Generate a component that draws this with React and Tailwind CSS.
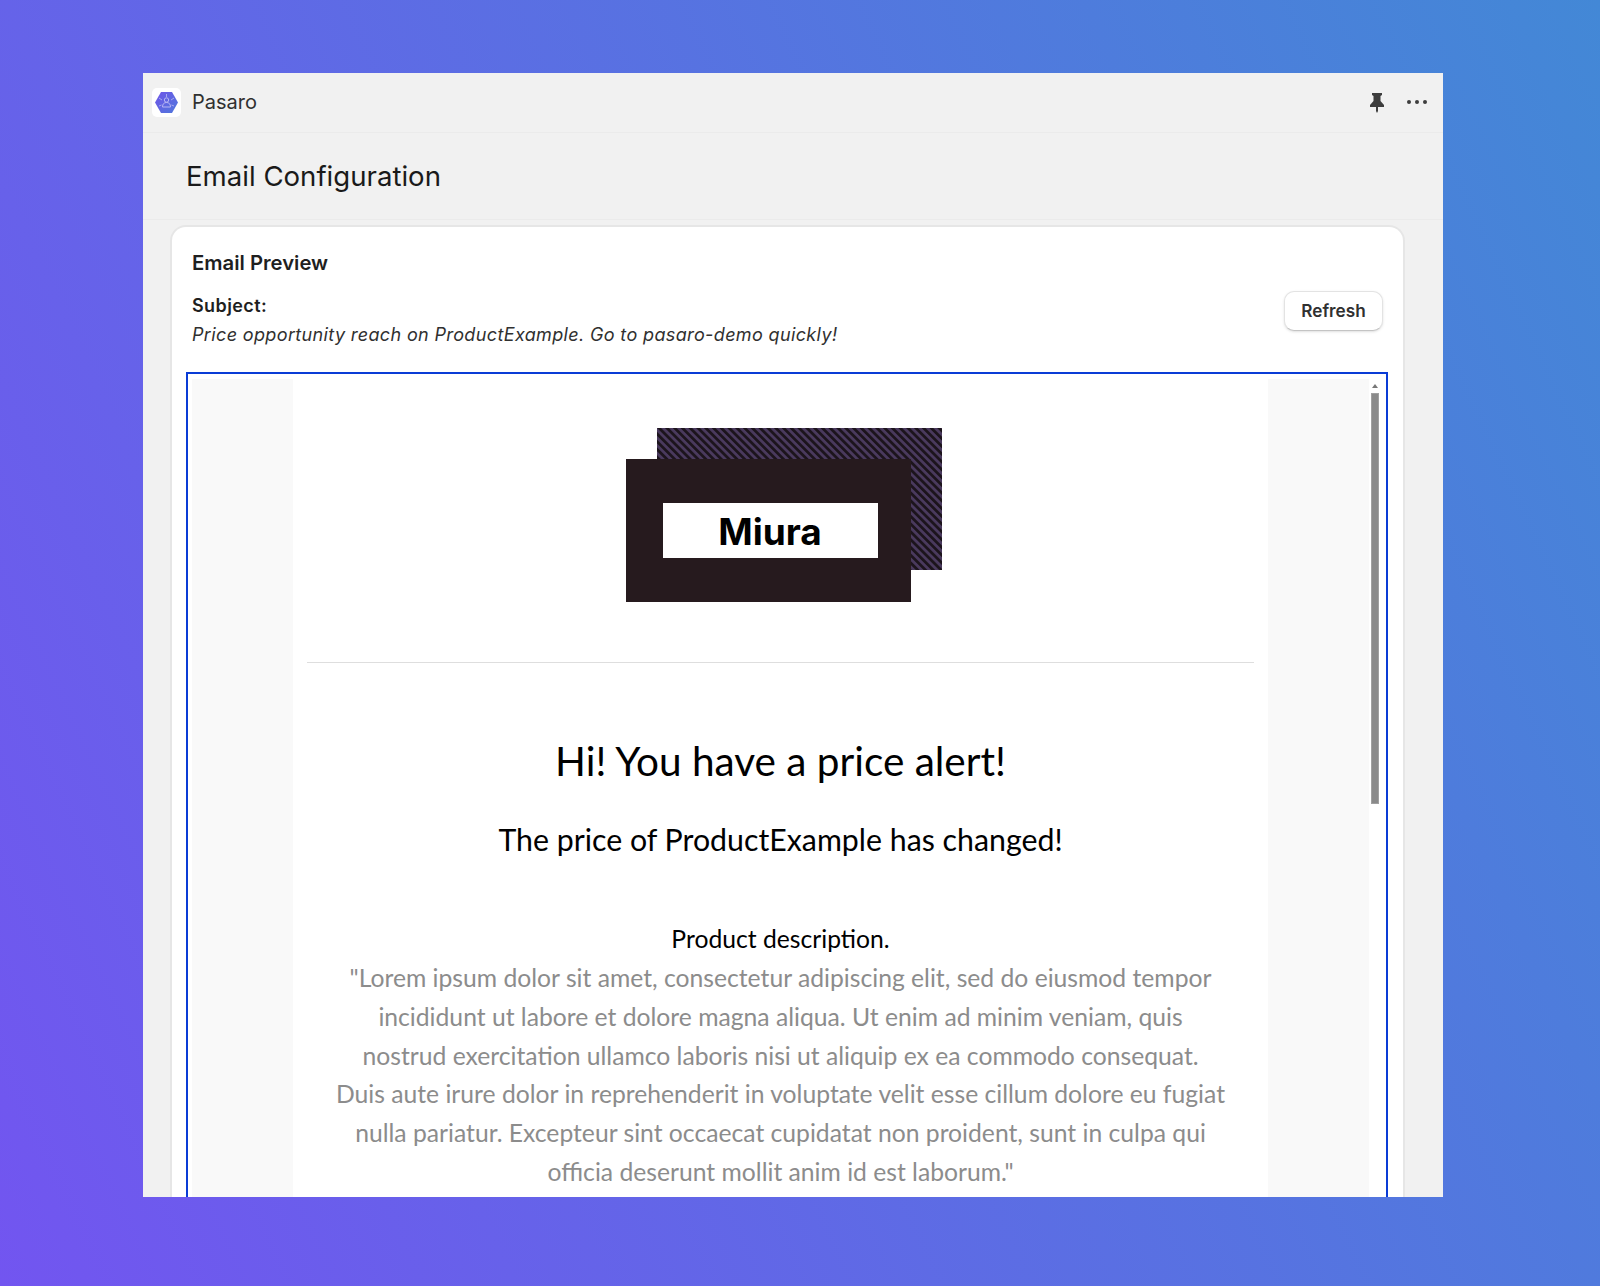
const paragraph = [
  '"Lorem ipsum dolor sit amet, consectetur adipiscing elit, sed do eiusmod tempor',
  'incididunt ut labore et dolore magna aliqua. Ut enim ad minim veniam, quis',
  'nostrud exercitation ullamco laboris nisi ut aliquip ex ea commodo consequat.',
  'Duis aute irure dolor in reprehenderit in voluptate velit esse cillum dolore eu fugiat',
  'nulla pariatur. Excepteur sint occaecat cupidatat non proident, sunt in culpa qui',
  'officia deserunt mollit anim id est laborum."',
]

function AppLogo() {
  return (
    <div className="flex h-[29px] w-[29px] items-center justify-center rounded-[5px] bg-white">
      <svg width="25" height="23" viewBox="0 0 25 23">
        <defs>
          <linearGradient id="hex" x1="0" y1="0" x2="1" y2="1">
            <stop offset="0" stopColor="#6f55e8" />
            <stop offset="1" stopColor="#5078dc" />
          </linearGradient>
        </defs>
        <path d="M7 1h11l6 10.500-6 10.500H7L1 11.500z" fill="url(#hex)" />
        <circle cx="12.500" cy="9" r="2.200" fill="none" stroke="#b9b6f4" strokeWidth="1" />
        <path d="M8.500 16c0-3 1.500-4.500 4-4.500s4 1.500 4 4.500z" fill="none" stroke="#b9b6f4" strokeWidth="1" />
        <path d="M12.500 3v3M5 15l2.500-1M20 15l-2.500-1M5 7l3 2M20 7l-3 2" stroke="#a9a9f0" strokeWidth="1" />
      </svg>
    </div>
  )
}

function PinIcon() {
  return (
    <svg width="16" height="20" viewBox="0 0 16 20" fill="#3d3d3d">
      <path d="M3 0h10v2l-1.500 1v5L15 12v2H9v4l-1 2-1-2v-4H1v-2l3.500-4V3L3 2z" />
    </svg>
  )
}

function MiuraLogo() {
  return (
    <svg width="316" height="175" viewBox="0 0 316 175">
      <defs>
        <pattern id="stripes" width="5.500" height="5.500" patternUnits="userSpaceOnUse" patternTransform="rotate(-45)">
          <rect width="5.500" height="5.500" fill="#4a3a5e" />
          <rect width="2.800" height="5.500" fill="#1c141c" />
        </pattern>
      </defs>
      <rect x="31" y="0" width="285" height="142" fill="url(#stripes)" />
      <rect x="0" y="31" width="285" height="143" fill="#261a1e" />
      <rect x="37" y="75" width="215" height="55" fill="#ffffff" />
      <text x="144" y="117" textAnchor="middle" fontFamily="Inter, sans-serif" fontWeight="700" fontSize="37" fill="#000000">
        Miura
      </text>
    </svg>
  )
}

export default function App() {
  return (
    <div className="h-[1286px] overflow-hidden bg-linear-[65deg] from-[#7255f0] to-[#4388d6] pl-[143px] pr-[157px] pt-[73px] font-['Inter',sans-serif]">
      <div className="flex h-[1124px] flex-col overflow-hidden bg-[#f1f1f1]">
        <div className="flex h-[60px] shrink-0 items-center justify-between border-b border-[#ebebeb] pl-[9px] pr-[16px]">
          <div className="flex items-center gap-[11px]">
            <AppLogo />
            <span className="mt-[-2px] text-[20px] text-[#303030]">Pasaro</span>
          </div>
          <div className="flex items-center gap-[22px]">
            <PinIcon />
            <div className="mt-[-2px] flex gap-[4px]">
              <span className="h-[4px] w-[4px] rounded-full bg-[#3d3d3d]" />
              <span className="h-[4px] w-[4px] rounded-full bg-[#3d3d3d]" />
              <span className="h-[4px] w-[4px] rounded-full bg-[#3d3d3d]" />
            </div>
          </div>
        </div>

        <div className="flex h-[87px] shrink-0 items-center border-b border-[#ebebeb] pl-[43px]">
          <h1 className="mt-[2px] text-[27.600px] text-[#1a1a1a]">Email Configuration</h1>
        </div>

        <div className="ml-[27px] mr-[38px] mt-[5px] flex-1 rounded-t-[16px] border-2 border-b-0 border-[#e6e6e6] bg-white pl-[14px] pr-[15px] pt-[24px]">
          <h2 className="px-[6px] text-[20.300px] font-semibold leading-[24px] text-[#1f1f1f]">Email Preview</h2>
          <div className="mt-[19px] flex items-start justify-between pl-[6px] pr-[5px]">
            <div>
              <div className="text-[18px] font-semibold leading-[24px] tracking-[0.4px] text-[#1f1f1f]">Subject:</div>
              <div className="mt-[5px] text-[18px] italic leading-[24px] tracking-[0.36px] text-[#303030]">
                Price opportunity reach on ProductExample. Go to pasaro-demo quickly!
              </div>
            </div>
            <button className="mt-[-3px] h-[40px] w-[99px] rounded-[10px] border border-[#e3e3e3] border-b-[#c4c4c4] bg-white text-[17.200px] font-semibold text-[#303030] shadow-sm">
              Refresh
            </button>
          </div>

          <div className="mt-[25px] h-[900px] border-[2.500px] border-b-0 border-[#0a3cd6] bg-white pl-[4px] pt-[5px]">
            <div className="flex h-full">
              <div className="flex-1 bg-[#f9f9f9]">
                <div className="mx-auto h-full w-[975px] bg-white px-[14px] pt-[49px]">
                  <div className="flex justify-center pl-[7px]">
                    <MiuraLogo />
                  </div>
                  <div className="mt-[59px] border-t border-[#dedede]" />
                  <div className="pt-[70px] text-center font-['Lato',sans-serif] text-black">
                    <h3 className="text-[40.500px] leading-[56px]">Hi! You have a price alert!</h3>
                    <p className="mt-[30px] text-[30.300px] leading-[40px]">The price of ProductExample has changed!</p>
                    <p className="mt-[60px] text-[24.700px] leading-[40px]">Product description.</p>
                    {paragraph.map((line) => (
                      <p key={line} className="whitespace-nowrap text-[24.700px] leading-[38.800px] text-[#8c8c8c]">
                        {line}
                      </p>
                    ))}
                  </div>
                </div>
              </div>
              <div className="w-[17px] shrink-0 bg-white">
                <div className="ml-[3px] mt-[5px] h-0 w-0 border-x-[3px] border-b-[4px] border-x-transparent border-b-[#777777]" />
                <div className="ml-[2px] mt-[5px] h-[411px] w-[8px] border border-[#a0a0a0] bg-[#8a8a8a]" />
              </div>
            </div>
          </div>
        </div>
      </div>
    </div>
  )
}
